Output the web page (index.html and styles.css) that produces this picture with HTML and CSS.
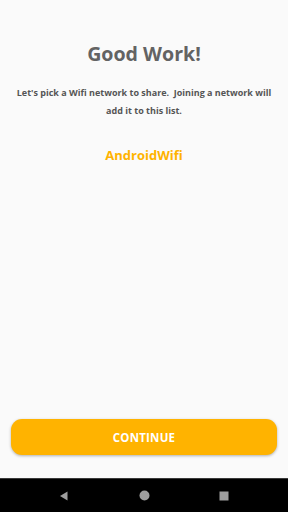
FILE: index.html
```html
<!DOCTYPE html>
<html>
<head>
<meta charset="utf-8">
<link rel="stylesheet" href="styles.css">
</head>
<body>
<div class="screen">
  <main class="content">
    <h1 class="title">Good Work!</h1>
    <p class="desc">Let's pick a Wifi network to share.&nbsp; Joining a network will add it to this list.</p>
    <div class="network">AndroidWifi</div>
  </main>
  <div class="actions">
    <button class="continue">CONTINUE</button>
  </div>
  <nav class="navbar">
    <svg class="nav-icon" width="10" height="10" viewBox="0 0 10 10"><polygon points="8.5,0.5 8.5,9.5 1,5" fill="#9e9e9e"/></svg>
    <svg class="nav-icon" width="11" height="11" viewBox="0 0 11 11"><circle cx="5.5" cy="5.5" r="5" fill="#9e9e9e"/></svg>
    <svg class="nav-icon" width="10" height="10" viewBox="0 0 10 10"><rect x="0.5" y="0.5" width="9" height="9" fill="#9e9e9e"/></svg>
  </nav>
</div>
</body>
</html>
```

FILE: styles.css
```css
* { box-sizing: border-box; }
html, body { margin: 0; padding: 0; }
body {
  width: 288px;
  height: 512px;
  background: #fafafa;
  font-family: "Open Sans", "Lato", sans-serif;
}
.screen {
  display: flex;
  flex-direction: column;
  height: 512px;
}
.content {
  flex: 1;
  display: flex;
  flex-direction: column;
  align-items: center;
  padding-top: 40px;
}
.title {
  margin: 0;
  font-size: 19.6px;
  font-weight: 700;
  color: #636363;
  line-height: 28px;
}
.desc {
  margin: 16px 0 0;
  padding: 0 14px;
  text-align: center;
  font-size: 9px;
  font-weight: 700;
  color: #555;
  line-height: 18px;
}
.network {
  margin-top: 26px;
  font-size: 13px;
  font-weight: 700;
  color: #ffb300;
  line-height: 18px;
}
.actions {
  padding: 0 11px 23px;
}
.continue {
  display: block;
  width: 100%;
  height: 36px;
  border: none;
  border-radius: 11px;
  background: #ffb300;
  color: #fff;
  font-family: "Open Sans", "Lato", sans-serif;
  font-size: 11.5px;
  font-weight: 700;
  letter-spacing: 0.2px;
  box-shadow: 0 1px 3px rgba(0,0,0,0.3);
}
.navbar {
  height: 34px;
  background: #000;
  border-top: 1px solid #3a3a3a;
  display: flex;
  align-items: center;
  justify-content: space-between;
  padding: 0 59px 0 59px;
}
.nav-icon { display: block; }
```
